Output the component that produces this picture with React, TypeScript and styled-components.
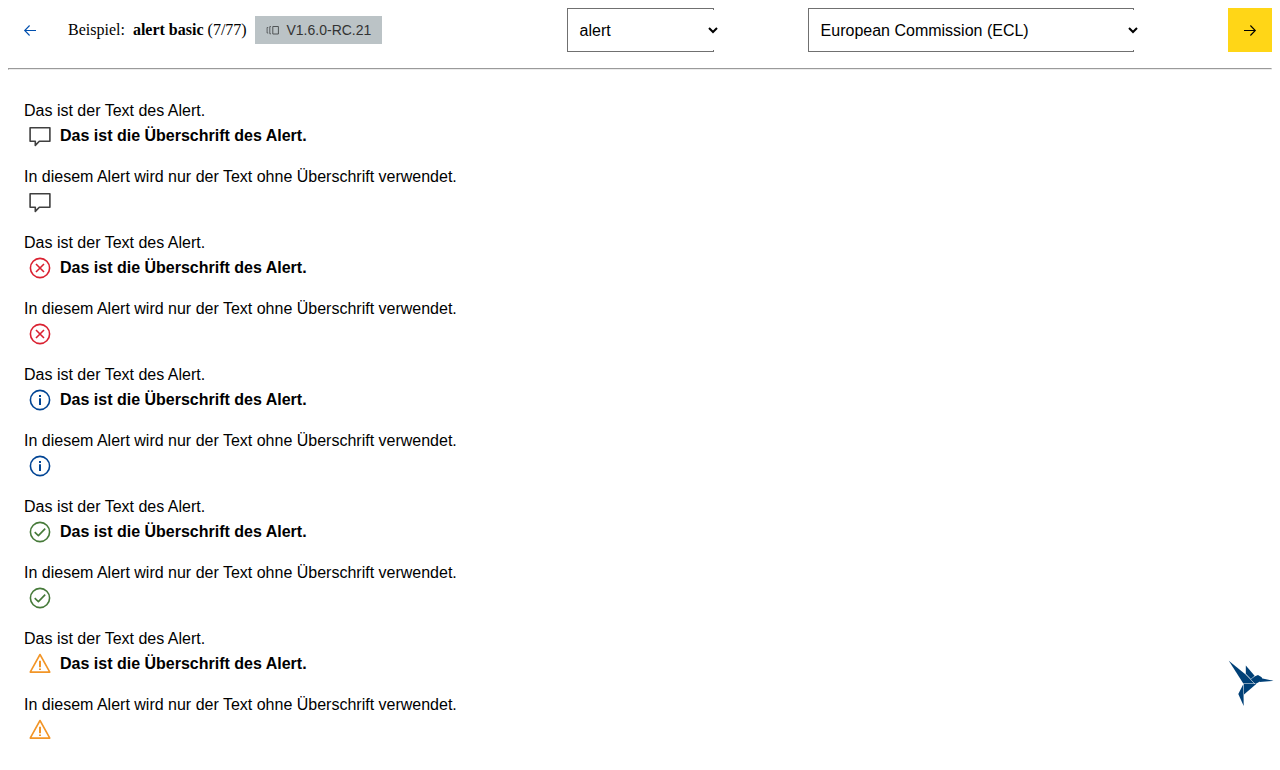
import React from 'react';
import styled, { createGlobalStyle } from 'styled-components';

const GlobalStyle = createGlobalStyle`
  * { box-sizing: border-box; }
  body { margin: 0; background: #fff; color: #000; font: 16px "Liberation Serif", serif; }
  svg { display: block; flex: none; }
`;

const Page = styled.div`
  height: 770px;
  padding: 8px;
  overflow: hidden;
`;

const Header = styled.header`
  display: flex;
  align-items: center;
  justify-content: space-between;
  height: 44px;
`;

const Intro = styled.div`
  display: flex;
  align-items: center;
  width: 374px;
`;

const NavButton = styled.button<{ $primary?: boolean }>`
  display: flex;
  align-items: center;
  justify-content: center;
  width: 44px;
  height: 44px;
  padding: 0;
  border: 0;
  background: ${(p) => (p.$primary ? '#ffd617' : 'transparent')};
  color: ${(p) => (p.$primary ? '#000' : '#004fae')};
`;

const Example = styled.div`
  margin-left: 16px;
  width: 187px;
  line-height: 18px;
  white-space: pre;
`;

const Badge = styled.span`
  display: flex;
  align-items: center;
  gap: 6.5px;
  width: 127px;
  height: 28px;
  padding-left: 11px;
  background: #bbc3c6;
  color: #333;
  font: 14px "Liberation Sans", sans-serif;
`;

const Select = styled.div<{ $width: number }>`
  position: relative;
  display: flex;
  align-items: center;
  width: ${(p) => p.$width}px;
  height: 44px;
  padding: 2px 0 0 11.6px;
  border: 1px solid #707070;
  font: 16px "Liberation Sans", sans-serif;
  white-space: nowrap;

  &::after {
    content: '';
    position: absolute;
    top: 1px;
    bottom: 1px;
    right: -1px;
    width: 1px;
    background: #fff;
  }
`;

const Chevron = styled.svg`
  position: absolute;
  z-index: 1;
  right: -6px;
  top: 15px;
`;

const Gap = styled.div<{ $width: number }>`
  width: ${(p) => p.$width}px;
`;

const Rule = styled.hr`
  height: 2px;
  margin: 16px 0;
  border: 1px solid;
  border-color: #9a9a9a #eee #ececec #9a9a9a;
`;

const Alerts = styled.main`
  padding: 16px;
  display: flex;
  flex-direction: column;
  gap: 16px;
  font: 16px/18px "Liberation Sans", sans-serif;
`;

const AlertBox = styled.section`
  height: 50px;
`;

const Heading = styled.div`
  display: flex;
  gap: 4px;
  height: 32px;
  font-weight: 700;
  line-height: 32px;
`;

const Logo = styled.svg`
  position: absolute;
  left: 1224px;
  top: 656px;
`;

type Kind = 'default' | 'error' | 'info' | 'success' | 'warning';

const colors: Record<Kind, string> = {
  default: '#404040',
  error: '#da2131',
  info: '#004494',
  success: '#467a39',
  warning: '#f29527',
};

const AlertIcon = ({ kind }: { kind: Kind }) => (
  <svg width="32" height="32" viewBox="0 0 32 32" fill="none" stroke={colors[kind]} strokeWidth="1.6" strokeLinejoin="round">
    {kind === 'default' && <path d="M6.1 7.8H25.9V21.2H15.3L11.3 25.4V21.2H6.1Z" />}
    {kind === 'warning' && (
      <>
        <path d="M16 6.5L25.8 24.1H6.2Z" />
        <path d="M16 12.8V19.2M16 20.4V22" strokeWidth="2" />
      </>
    )}
    {kind !== 'default' && kind !== 'warning' && <circle cx="16" cy="16" r="9.6" />}
    {kind === 'error' && <path d="M12 12L20 20M20 12L12 20" />}
    {kind === 'info' && <path d="M16 11V12.9M16 14.3V21" strokeWidth="2" />}
    {kind === 'success' && <path d="M10.7 16.2L14.4 19.6L21.2 12.6" />}
  </svg>
);

const Arrow = ({ back }: { back?: boolean }) => (
  <svg width="14" height="14" viewBox="0 0 14 14" fill="none" stroke="currentColor" strokeWidth="1.1">
    <path d={back ? 'M13 7.5H1.7M6.6 2.5L1.7 7.5L6.6 12.5' : 'M1 7.5H12.3M7.4 2.5L12.3 7.5L7.4 12.5'} />
  </svg>
);

const Dropdown = ({ label, width }: { label: string; width: number }) => (
  <Select $width={width}>
    {label}
    <Chevron width="12" height="12" viewBox="0 0 12 12" fill="none" stroke="#000" strokeWidth="2">
      <path d="M2 4L6 8L10 4" />
    </Chevron>
  </Select>
);

const kinds: Kind[] = ['default', 'error', 'info', 'success', 'warning'];

export default function App() {
  return (
    <Page>
      <GlobalStyle />
      <Header>
        <Intro>
          <NavButton aria-label="Zurück"><Arrow back /></NavButton>
          <Example>Beispiel:  <b>alert basic</b> (7/77)</Example>
          <Badge>
            <svg width="14" height="14" viewBox="0 0 14 14" fill="none" stroke="#505456" strokeWidth="1">
              <path d="M6.8 3.5H12.4V11H6.8Z" />
              <path d="M5 3.6H3.8V10.8H5M2.2 4.5H1.1V10H2.2" strokeWidth="0.9" />
            </svg>
            V1.6.0-RC.21
          </Badge>
        </Intro>
        <Gap $width={185} />
        <Dropdown label="alert" width={147} />
        <Gap $width={94} />
        <Dropdown label="European Commission (ECL)" width={326} />
        <Gap $width={94} />
        <NavButton $primary aria-label="Weiter"><Arrow /></NavButton>
      </Header>
      <Rule />
      <Alerts>
        {kinds.map((kind) => (
          <React.Fragment key={kind}>
            <AlertBox>
              Das ist der Text des Alert.
              <Heading>
                <AlertIcon kind={kind} />
                <span>Das ist die Überschrift des Alert.</span>
              </Heading>
            </AlertBox>
            <AlertBox>
              In diesem Alert wird nur der Text ohne Überschrift verwendet.
              <Heading><AlertIcon kind={kind} /></Heading>
            </AlertBox>
          </React.Fragment>
        ))}
      </Alerts>
      <Logo width="56" height="56" viewBox="0 0 56 56" fill="#004077">
        <path d="M4.8 4.8L21.3 18.3L30.3 27.5L19.3 27.4Z" />
        <path d="M21.8 9.5L30.6 19.8L27 22.9L21.8 17.8Z" />
        <path d="M22 18.6L27.2 23.3L30.9 20.5L31 27.6Z" />
        <path d="M31 20.3L34 19.1L37.7 21.2L38.5 24L31.5 27.9L27.4 23.4Z" />
        <path d="M37.4 22.3L49.5 24.8L35.5 26.1Z" />
        <path d="M20 28.1L32.2 28.1L20 38.5Z" />
        <path d="M19.4 28L19.7 50L14.3 38Z" />
      </Logo>
    </Page>
  );
}
